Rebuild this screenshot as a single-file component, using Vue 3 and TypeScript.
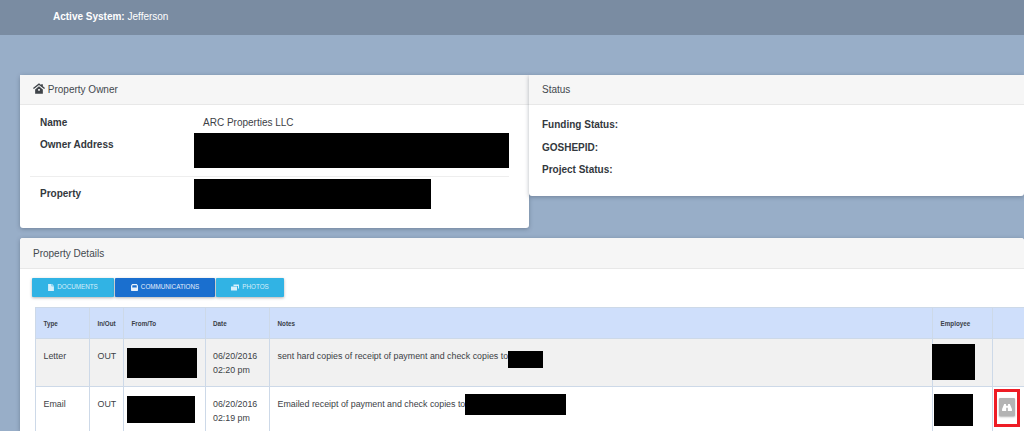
<script setup lang="ts">
interface Row {
  type: string
  dir: string
  date: string
  time: string
  note: string
  fromW: number
  fromH: number
  noteW: number
  noteH: number
  noteShift: number
  empW: number
  empH: number
  empX: number
  empY: number
  action: boolean
}
const rows: Row[] = [
  { type: 'Letter', dir: 'OUT', date: '06/20/2016', time: '02:20 pm', note: 'sent hard copies of receipt of payment and check copies to', fromW: 70, fromH: 30, noteW: 35, noteH: 17, noteShift: 3, empW: 43, empH: 36, empX: 0, empY: 5, action: false },
  { type: 'Email', dir: 'OUT', date: '06/20/2016', time: '02:19 pm', note: 'Emailed receipt of payment and check copies to', fromW: 68, fromH: 27, noteW: 101, noteH: 21, noteShift: 0, empW: 39, empH: 32, empX: 2, empY: 7, action: true },
]
</script>

<template>
  <div class="page">
    <header class="topbar"><b>Active System:</b> Jefferson</header>
    <div class="top-cards">
      <section class="card owner">
        <div class="card-head">
          <svg class="house" viewBox="0 0 14 12" width="12" height="11"><path d="M7 0 0 5.500 1 6.700 7 2l6 4.700 1-1.200-2.500-2V1h-2v.9zM2.500 7.200V12h9V7.200L7 3.500zM6 6.500h2v2H6z" fill="#3f4449" fill-rule="evenodd"/></svg>
          Property Owner
        </div>
        <div class="owner-body">
          <div class="kv name-row"><b>Name</b><span>ARC Properties LLC</span></div>
          <div class="kv addr-row"><b>Owner Address</b><i class="redact addr"></i></div>
          <div class="kv prop-row"><b>Property</b><i class="redact prop"></i></div>
        </div>
      </section>
      <section class="card status">
        <div class="card-head">Status</div>
        <div class="status-body">
          <b>Funding Status:</b>
          <b>GOSHEPID:</b>
          <b>Project Status:</b>
        </div>
      </section>
    </div>
    <section class="card details">
      <div class="card-head tall">Property Details</div>
      <div class="tabs">
        <button class="tab t1">
          <svg viewBox="0 0 10 12" width="6" height="7"><path d="M0 0h6v4h4v8H0zM7 0l3 3H7z" fill="#d8f0fb"/></svg>DOCUMENTS
        </button>
        <button class="tab t2 active">
          <svg viewBox="0 0 12 12" width="7" height="7"><path d="M2 0h8l2 3v8l-1 1H1l-1-1V3zM2.500 2 2 6h8l-.5-4z" fill="#e8f1fb" fill-rule="evenodd"/></svg>COMMUNICATIONS
        </button>
        <button class="tab t3">
          <svg viewBox="0 0 16 12" width="8" height="7"><path d="M5 0h11v8h-2V3H5zM0 4h12v8H0z" fill="#d8f0fb"/></svg>PHOTOS
        </button>
      </div>
      <table class="grid">
        <colgroup>
          <col class="c1"><col class="c2"><col class="c3"><col class="c4"><col class="c5"><col class="c6"><col class="c7">
        </colgroup>
        <thead>
          <tr><th>Type</th><th>In/Out</th><th>From/To</th><th>Date</th><th>Notes</th><th>Employee</th><th></th></tr>
        </thead>
        <tbody>
          <tr v-for="(r, i) in rows" :key="i" :class="{ odd: i === 0 }">
            <td>{{ r.type }}</td>
            <td>{{ r.dir }}</td>
            <td class="box-cell"><i class="redact" :style="{ width: r.fromW + 'px', height: r.fromH + 'px' }"></i></td>
            <td class="date">{{ r.date }}<br>{{ r.time }}</td>
            <td class="note">{{ r.note }}<i class="redact inline" :style="{ width: r.noteW + 'px', height: r.noteH + 'px', margin: -r.noteH / 2 + 'px 0', transform: 'translateY(' + r.noteShift + 'px)' }"></i></td>
            <td class="box-cell emp"><i class="redact" :style="{ width: r.empW + 'px', height: r.empH + 'px', marginLeft: r.empX + 'px', marginTop: r.empY + 'px' }"></i></td>
            <td class="act">
              <span v-if="r.action" class="mark">
                <span class="act-btn">
                  <svg viewBox="0 0 14 10" width="10" height="7"><path d="M3 0h2.500v2.500h3V0H11l3 7v3H8.200V5.500H5.800V10H0V7z" fill="#fff"/></svg>
                </span>
              </span>
            </td>
          </tr>
        </tbody>
      </table>
    </section>
  </div>
</template>

<style>
html, body { margin: 0; overflow: hidden; }
</style>

<style scoped>
.page {
  width: 1024px;
  height: 431px;
  overflow: hidden;
  background: #98aec8;
  font-family: "Liberation Sans", Arial, sans-serif;
  color: #3c4146;
}
.topbar {
  height: 35px;
  box-sizing: border-box;
  padding: 10px 0 0 53px;
  background: #7a8ca2;
  color: #fff;
  font-size: 10px;
  line-height: 13px;
}
.top-cards {
  display: flex;
  align-items: flex-start;
  margin: 40px 0 0 20px;
}
.card {
  background: #fff;
  border-radius: 3px 3px 0 0;
  box-shadow: 0 1px 4px rgba(40, 50, 70, .35);
}
.card-head {
  height: 30px;
  box-sizing: border-box;
  padding: 8px 0 0 13px;
  background: #f6f6f6;
  border-bottom: 1px solid #e8e8e8;
  font-size: 10px;
  line-height: 13px;
  color: #44494e;
}
.card-head.tall { height: 31px; padding-top: 9px; }
.house { vertical-align: -1px; }
.owner { width: 509px; height: 153px; border-radius: 3px; }
.owner-body { padding: 11px 20px 0 10px; }
.kv { display: flex; font-size: 10px; line-height: 13px; }
.kv b { width: 163px; padding-left: 10px; box-sizing: border-box; color: #33383d; }
.kv > span { margin-left: 10px; color: #3c4146; }
.name-row { height: 17px; }
.addr-row { height: 43px; border-bottom: 1px solid #eee; align-items: flex-start; }
.addr-row b { padding-top: 5px; }
.addr-row .redact { margin-left: 1px; }
.prop-row { padding-top: 2px; }
.prop-row b { padding-top: 8px; }
.prop-row .redact { margin-left: 1px; }
.redact { display: inline-block; background: #000; }
.addr { width: 315px; height: 35px; }
.prop { width: 237px; height: 30px; }
.status { width: 495px; height: 121px; border-radius: 0 0 3px 3px; }
.status-body {
  display: flex;
  flex-direction: column;
  gap: 9.500px;
  padding: 13px 0 0 13px;
  font-size: 10px;
  line-height: 13px;
  color: #33383d;
}
.details { margin: 10px 0 0 20px; width: 1004px; height: 193px; overflow: hidden; }
.tabs { display: flex; gap: 1px; padding: 9px 0 0 12px; }
.tab {
  height: 19px;
  border: 0;
  border-radius: 1px;
  padding: 0;
  display: flex;
  align-items: center;
  justify-content: center;
  gap: 3px;
  background: #31b3e4;
  color: #d6eef9;
  font: 6.300px/1 "Liberation Sans", Arial, sans-serif;
  box-shadow: 0 1px 3px rgba(0, 0, 0, .3);
}
.t1 { width: 82px; }
.t2 { width: 100px; }
.t3 { width: 68px; }
.active { background: #1a6fcf; color: #e4eefa; }
.grid {
  table-layout: fixed;
  width: 989px;
  margin: 10px 0 0 15px;
  border-collapse: collapse;
}
.c1 { width: 54px; }
.c2 { width: 34px; }
.c3 { width: 81.500px; }
.c4 { width: 64.500px; }
.c5 { width: 663px; }
.c6 { width: 60px; }
.c7 { width: 32px; }
th, td {
  box-sizing: border-box;
  border: 1px solid #cdd9e8;
  padding: 0;
  text-align: left;
  vertical-align: top;
}
th {
  height: 31px;
  background: #cfdffb;
  color: #3a4048;
  font-size: 6.300px;
  font-weight: 700;
  padding: 0 0 0 7.500px;
  vertical-align: middle;
}
td {
  height: 48px;
  padding: 11px 0 0 7.500px;
  font-size: 8.850px;
  line-height: 13.500px;
  color: #3c4146;
}
.odd td { background: #f1f1f1; }
td.box-cell { padding: 9px 0 0 3px; line-height: 0; }
td.emp { padding: 0 0 0 0; }
td.emp .redact { transform: translateX(-1px); }
.note { white-space: nowrap; }
.inline { vertical-align: middle; }
td.act { padding: 0; position: relative; }
.mark {
  position: absolute;
  left: 1px;
  top: 2px;
  width: 20px;
  height: 32px;
  border: 3px solid #ee1c25;
  display: flex;
  align-items: center;
  justify-content: center;
}
.act-btn {
  width: 16px;
  height: 18px;
  margin-bottom: 2px;
  background: #b3b3b3;
  border-radius: 1px;
  box-shadow: 0 1px 2px rgba(0, 0, 0, .3);
  display: flex;
  align-items: center;
  justify-content: center;
}
</style>
